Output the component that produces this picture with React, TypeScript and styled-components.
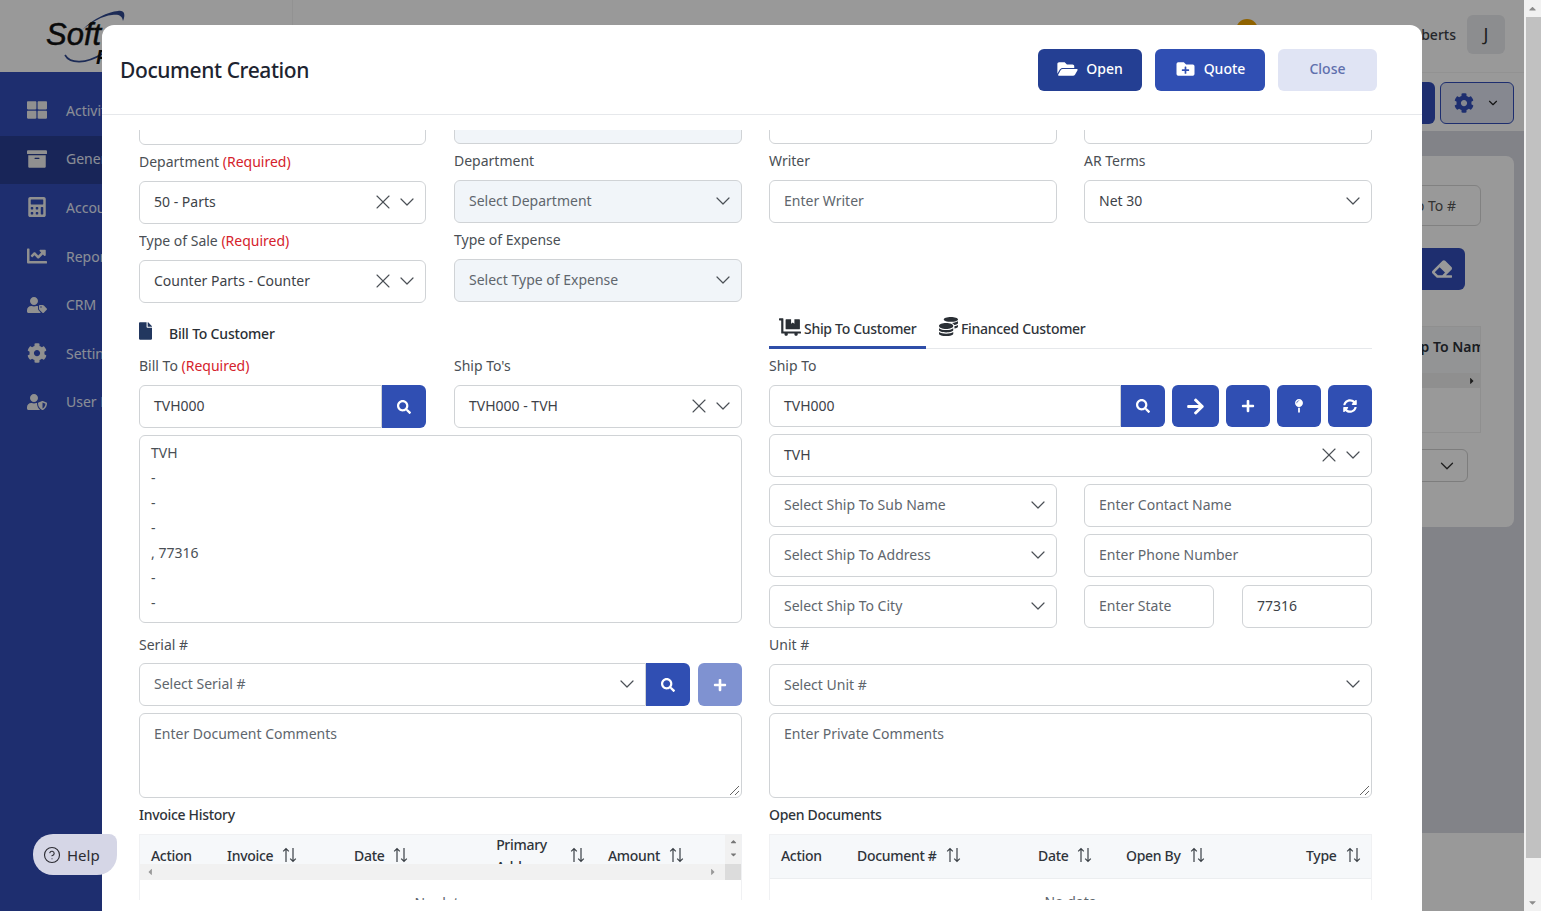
import React from "react";
import styled, { createGlobalStyle } from "styled-components";
import { ChevronDown, X, CircleHelp } from "lucide-react";
import {
  FaThLarge, FaArchive, FaCalculator, FaChartLine, FaUserTag, FaCog, FaUserShield,
  FaFolderOpen, FaFolderPlus, FaSearch, FaArrowRight, FaPlus, FaMapPin, FaSyncAlt,
  FaFile, FaDollyFlatbed, FaCoins, FaEraser, FaCaretRight, FaCaretUp, FaCaretDown, FaCaretLeft,
} from "react-icons/fa";

const Global = createGlobalStyle`
  html, body { margin: 0; padding: 0; height: 911px; overflow: hidden; background: #fff; }
  * { box-sizing: border-box; }
  body { font-family: "Noto Sans", "Liberation Sans", sans-serif; font-size: 14px; color: #3d4248; }
`;

const Screen = styled.div`
  display: flex;
  width: 1541px;
  height: 911px;
  overflow: hidden;
`;

const Page = styled.div`
  position: relative;
  flex: 1;
  display: flex;
  flex-direction: column;
  height: 911px;
  overflow: hidden;
  background: #fff;
`;

const Backdrop = styled.div`
  position: absolute;
  inset: 0;
  background: rgba(0, 0, 0, 0.4);
`;

/* page behind the modal */
const TopBar = styled.header`
  height: 72px;
  flex: none;
  display: flex;
  align-items: center;
  padding-right: 19px;
  background: #fff;
`;

const LogoArea = styled.div`
  position: relative;
  width: 293px;
  height: 72px;
  border-right: 1px solid #f4f4f4;
`;

const LogoText = styled.span`
  position: absolute;
  left: 46px;
  top: 17px;
  font-family: "Liberation Sans", sans-serif;
  font-style: italic;
  font-size: 31px;
  -webkit-text-stroke: 0.5px #111;
  color: #111;
`;

const LogoSub = styled.span`
  position: absolute;
  left: 96px;
  top: 46px;
  font-family: "Liberation Sans", sans-serif;
  font-style: italic;
  font-weight: 700;
  font-size: 20px;
  color: #111;
`;

const LogoSwoosh = styled.svg`
  position: absolute;
  left: 60px;
  top: 8px;
`;

const TopRight = styled.div`
  flex: 1;
  display: flex;
  align-items: center;
  justify-content: flex-end;
`;

const Dot = styled.span`
  width: 22px;
  height: 22px;
  margin: -13px 102px 0 0;
  border-radius: 50%;
  background: #f0a500;
`;

const UserName = styled.span`
  font-weight: 500;
  font-size: 14px;
  margin: -4px 11px 0 0;
`;

const Avatar = styled.div`
  width: 38px;
  height: 39px;
  margin-top: -4px;
  border-radius: 6px;
  background: #e9ebee;
  display: flex;
  align-items: center;
  justify-content: center;
  font-size: 18px;
  color: #333;
`;

const Body = styled.div`
  flex: 1;
  display: flex;
  min-height: 0;
`;

const Sidebar = styled.nav`
  width: 240px;
  flex: none;
  padding-top: 15px;
  background: #324eb9;
`;

const NavItem = styled.div<{ $active?: boolean }>`
  height: 48.6px;
  padding: 0 0 2px 27px;
  display: flex;
  align-items: center;
  gap: 19px;
  color: #e6ebfb;
  font-size: 14px;
  background: ${(p) => (p.$active ? "#283f93" : "transparent")};
  svg { width: 20px; height: 20px; color: #f0f0f0; }
`;

const Main = styled.main`
  flex: 1;
  display: flex;
  flex-direction: column;
  min-width: 0;
`;

const Toolbar = styled.div`
  height: 59px;
  flex: none;
  display: flex;
  justify-content: flex-end;
  gap: 5px;
  padding: 9px 10px 0 0;
  border-top: 1px solid #f3f3f3;
  background: #fff;
`;

const ToolPrimary = styled.div`
  width: 100px;
  height: 42px;
  border-radius: 6px;
  background: #324eb9;
`;

const ToolGear = styled.div`
  width: 74px;
  height: 42px;
  border: 1px solid #324eb9;
  border-radius: 6px;
  background: #dfe3f1;
  color: #324eb9;
  display: flex;
  align-items: center;
  justify-content: center;
  gap: 12px;
  svg:last-child { color: #222; }
`;

const Content = styled.div`
  height: 702px;
  flex: none;
  padding: 25px 10px 0 0;
  background: #d9dae3;
`;

const BgCard = styled.div`
  height: 371px;
  padding-top: 29px;
  display: flex;
  flex-direction: column;
  align-items: flex-end;
  border-radius: 8px;
  background: #fff;
`;

const BgInput = styled.div`
  width: 200px;
  height: 41px;
  margin: 0 33px 22px 0;
  padding-right: 24px;
  border: 1px solid #d8d8d8;
  border-radius: 6px;
  display: flex;
  align-items: center;
  justify-content: flex-end;
  color: #555;
`;

const BgEraser = styled.div`
  width: 100px;
  height: 42px;
  margin: 0 49px 36px 0;
  border-radius: 6px;
  background: #324eb9;
  color: #fff;
  display: flex;
  align-items: center;
  justify-content: flex-end;
  padding-right: 13px;
  svg { width: 20px; height: 20px; }
`;

const BgTable = styled.div`
  width: 200px;
  height: 107px;
  margin: 0 33px 16px 0;
  border: 1px solid #eee;
  overflow: hidden;
`;

const BgTableHead = styled.div`
  height: 46px;
  padding: 0 0 8px 118px;
  display: flex;
  align-items: center;
  background: #f6f7f9;
  font-weight: 600;
  white-space: nowrap;
  color: #2c3138;
`;

const BgTableBar = styled.div`
  height: 15px;
  padding-right: 3px;
  display: flex;
  align-items: center;
  justify-content: flex-end;
  background: #eee;
  color: #333;
  font-size: 10px;
`;

const BgSelect = styled.div`
  width: 200px;
  height: 33px;
  margin-right: 46px;
  padding-right: 9px;
  border: 1px solid #d0d0d0;
  border-radius: 6px;
  display: flex;
  align-items: center;
  justify-content: flex-end;
  color: #333;
`;

const Footer = styled.div`
  flex: 1;
  background: #fff;
`;

const PageBar = styled.div`
  width: 17px;
  height: 911px;
  flex: none;
  display: flex;
  flex-direction: column;
  align-items: center;
  background: #f1f1f1;
  color: #8c8c8c;
`;

const BarArrow = styled.div`
  width: 17px;
  height: 17px;
  display: flex;
  align-items: center;
  justify-content: center;
  font-size: 11px;
`;

const BarThumb = styled.div`
  width: 15px;
  height: 841px;
  margin-left: 2px;
  background: #c1c1c1;
`;

const BarSpace = styled.div`
  flex: 1;
`;

/* modal */
const Modal = styled.section`
  position: absolute;
  left: 102px;
  top: 25px;
  width: 1320px;
  height: 886px;
  border-radius: 12px 12px 0 0;
  background: #fff;
  overflow: hidden;
`;

const ModalHeader = styled.div`
  height: 90px;
  padding: 0 45px 0 18px;
  display: flex;
  align-items: center;
  gap: 13px;
  border-bottom: 1px solid #e6e8eb;
`;

const Title = styled.h1`
  flex: 1;
  margin: 0;
  font-size: 21px;
  letter-spacing: -0.4px;
  font-weight: 500;
  color: #1d2430;
`;

const HeadButton = styled.button<{ $bg: string; $fg: string; $w: number }>`
  width: ${(p) => p.$w}px;
  height: 42px;
  padding: 0 0 2px;
  border: 0;
  border-radius: 6px;
  display: flex;
  align-items: center;
  justify-content: center;
  gap: 8px;
  font: 500 14px "Noto Sans", sans-serif;
  background: ${(p) => p.$bg};
  color: ${(p) => p.$fg};
  svg { width: 21px; height: 18px; }
`;

const ModalClip = styled.div`
  height: 783px;
  padding: 15px 50px 0 37px;
`;

const ModalScroll = styled.div`
  height: 770px;
  overflow: hidden;
`;

const Form = styled.div`
  margin-top: -29px;
  display: grid;
  grid-template-columns: 603px 603px;
  column-gap: 27px;
`;

const Half = styled.div<{ $cols: string; $gap: number }>`
  display: grid;
  grid-template-columns: ${(p) => p.$cols};
  column-gap: ${(p) => p.$gap}px;
  align-content: start;
`;

const Stack = styled.div<{ $shift?: boolean }>`
  display: flex;
  flex-direction: column;
  margin-top: ${(p) => (p.$shift ? "1px" : "0")};
`;

const Col = styled.div`
  display: flex;
  flex-direction: column;
`;

const Label = styled.label<{ $strong?: boolean; $short?: boolean }>`
  display: block;
  height: ${(p) => (p.$short ? 35 : 36)}px;
  line-height: 34px;
  font-size: 14px;
  white-space: nowrap;
  letter-spacing: ${(p) => (p.$strong ? "-0.3px" : "0")};
  color: ${(p) => (p.$strong ? "#2f343a" : "#4a4f55")};
  font-weight: ${(p) => (p.$strong ? 500 : 400)};
`;

const Required = styled.span`
  color: #d5222c;
`;

const Control = styled.div<{ $h?: number; $fill?: boolean; $mb?: number; $flatRight?: boolean }>`
  height: ${(p) => p.$h ?? 43}px;
  margin-bottom: ${(p) => p.$mb ?? 0}px;
  flex: none;
  display: flex;
  align-items: center;
  padding: 0 6px 2px 14px;
  border: 1px solid #d0d3d6;
  border-radius: ${(p) => (p.$flatRight ? "6px 0 0 6px" : "6px")};
  background: ${(p) => (p.$fill ? "#f1f5f9" : "#fff")};
  min-width: 0;
`;

const Value = styled.span<{ $muted?: boolean }>`
  flex: 1;
  font-size: 14px;
  white-space: nowrap;
  color: ${(p) => (p.$muted ? "#60666d" : "#3d4248")};
`;

const Icon24 = styled.span`
  width: 24px;
  height: 24px;
  flex: none;
  color: #4b5056;
  svg { display: block; }
`;

const Group = styled.div<{ $mb?: number }>`
  display: flex;
  margin-bottom: ${(p) => p.$mb ?? 0}px;
  gap: 0;
  > div:first-child { flex: 1; }
`;

const IconBtn = styled.button<{ $w?: number; $left?: number; $edge?: string; $soft?: boolean }>`
  width: ${(p) => p.$w ?? 44}px;
  flex: none;
  margin-left: ${(p) => p.$left ?? 0}px;
  border: 0;
  border-radius: ${(p) => p.$edge ?? "6px"};
  display: flex;
  align-items: center;
  justify-content: center;
  color: #fff;
  background: ${(p) => (p.$soft ? "#7f92d1" : "#304fb3")};
  svg { width: 14px; height: 14px; }
`;

const BigArrow = styled(FaArrowRight)`
  && { width: 19px; height: 19px; }
`;

const SectionTitle = styled.div`
  height: 46px;
  display: flex;
  align-items: center;
  padding-top: 14px;
  gap: 17px;
  font-weight: 500;
  font-size: 14px;
  letter-spacing: -0.2px;
  color: #2a2f35;
  svg { width: 13px; height: 18px; margin-top: -5px; color: #22375f; }
`;

const Tabs = styled.div`
  height: 46px;
  display: flex;
  align-items: flex-end;
  border-bottom: 1px solid #e6e8eb;
`;

const Tab = styled.div<{ $active?: boolean; $w: number; $pad: number }>`
  width: ${(p) => p.$w}px;
  height: 38px;
  padding-left: ${(p) => p.$pad}px;
  margin-bottom: -1px;
  display: flex;
  align-items: center;
  gap: 3px;
  font-size: 14px;
  font-weight: 500;
  letter-spacing: -0.3px;
  white-space: nowrap;
  color: #2f343a;
  border-bottom: 3px solid ${(p) => (p.$active ? "#2f4ea8" : "transparent")};
  svg { flex: none; color: #2a2f35; margin-top: -4px; }
`;

const AddressBox = styled.div`
  height: 188px;
  margin: 7px 0 5px;
  padding: 4px 11px;
  border: 1px solid #d0d3d6;
  border-radius: 6px;
  line-height: 25px;
  font-size: 14px;
  color: #4a4f55;
`;

const TextArea = styled.div`
  position: relative;
  height: 85px;
  padding: 10px 14px;
  border: 1px solid #d0d3d6;
  border-radius: 6px;
  color: #60666d;
`;

const Grip = styled.svg`
  position: absolute;
  right: 1px;
  bottom: 1px;
`;

const Spacer = styled.div`
  height: 80px;
`;

const Cells = styled.div`
  display: grid;
  grid-template-columns: 288px 288px;
  column-gap: 27px;
  grid-template-rows: 50px 51px 43px;
`;

const TwoUp = styled.div`
  display: grid;
  grid-template-columns: 130px 130px;
  column-gap: 28px;
`;

const Table = styled.div`
  border: 1px solid #f0f1f3;
  height: 70px;
`;

const HeadClip = styled.div`
  display: flex;
  height: 29px;
  overflow: hidden;
  background: #f6f8fa;
`;

const HeadRow = styled.div<{ $cols: string; $h: number; $pb?: number }>`
  flex: 1;
  min-width: 0;
  height: ${(p) => p.$h}px;
  padding-bottom: ${(p) => p.$pb ?? 0}px;
  display: grid;
  grid-template-columns: ${(p) => p.$cols};
  grid-template-rows: minmax(0, 1fr);
  align-items: center;
  background: #f6f8fa;
  border-bottom: 1px solid #eceef0;
`;

const HeadCell = styled.div<{ $gap?: number }>`
  display: flex;
  align-items: center;
  gap: ${(p) => p.$gap ?? 9}px;
  padding-left: 11px;
  font-weight: 500;
  font-size: 14px;
  letter-spacing: -0.3px;
  color: #2f343a;
  white-space: nowrap;
`;

const TwoLine = styled.span`
  width: 51px;
  text-align: center;
  white-space: normal;
  line-height: 22px;
  margin-top: 2px;
`;

const VBar = styled.div`
  width: 16px;
  flex: none;
  display: flex;
  flex-direction: column;
  background: #f1f1f1;
  color: #777;
  font-size: 9px;
`;

const VArrow = styled.div`
  height: 13px;
  display: flex;
  align-items: center;
  justify-content: center;
`;

const HBarRow = styled.div`
  height: 16px;
  display: flex;
  background: #f1f1f1;
`;

const HBar = styled.div`
  flex: 1;
  padding: 0 7px 0 5px;
  display: flex;
  align-items: center;
  justify-content: space-between;
  color: #999;
  font-size: 10px;
`;

const BarCorner = styled.div`
  width: 16px;
  background: #dcdcdc;
`;

const NoData = styled.div`
  padding-top: 13px;
  text-align: center;
  font-size: 14px;
  color: #60666d;
`;

const Help = styled.div`
  position: absolute;
  left: 33px;
  top: 834px;
  width: 84px;
  height: 41px;
  padding-left: 10px;
  display: flex;
  align-items: center;
  gap: 6px;
  border-radius: 20px 8px 20px 20px;
  background: #d5d6e6;
  font-size: 15px;
  color: #2c2c33;
`;

const Sort = () => (
  <svg width="15" height="16" viewBox="0 0 15 16" fill="none" stroke="#3a4046" strokeWidth="1.2">
    <path d="M4 15V1.5M1.2 4.3 4 1.5l2.8 2.8" />
    <path d="M11 1v13.5M8.2 11.7l2.8 2.8 2.8-2.8" />
  </svg>
);

const Select = ({ value, muted, clear, h, fill, mb, flatRight }: {
  value: string; muted?: boolean; clear?: boolean; h?: number; fill?: boolean; mb?: number; flatRight?: boolean;
}) => (
  <Control $h={h} $fill={fill} $mb={mb} $flatRight={flatRight}>
    <Value $muted={muted}>{value}</Value>
    {clear && <Icon24><X size={24} strokeWidth={1.1} /></Icon24>}
    <Icon24><ChevronDown size={24} strokeWidth={1.2} /></Icon24>
  </Control>
);

const Input = ({ value, muted, h, fill, flatRight }: {
  value?: string; muted?: boolean; h?: number; fill?: boolean; flatRight?: boolean;
}) => (
  <Control $h={h} $fill={fill} $flatRight={flatRight}>
    <Value $muted={muted}>{value}</Value>
  </Control>
);

const Req = () => <Required>(Required)</Required>;

const NAV: [React.ReactNode, string, boolean?][] = [
  [<FaThLarge />, "Activity"],
  [<FaArchive />, "General", true],
  [<FaCalculator />, "Accounting"],
  [<FaChartLine />, "Reports"],
  [<FaUserTag />, "CRM"],
  [<FaCog />, "Settings"],
  [<FaUserShield />, "User Management"],
];

const LEFT = { $cols: "287px 288px", $gap: 28 };
const RIGHT = { $cols: "288px 288px", $gap: 27 };

export default function App() {
  return (
    <Screen>
      <Global />
      <Page>
        <TopBar>
          <LogoArea>
            <LogoSwoosh width="75" height="60" viewBox="0 0 75 60" fill="none">
              <path d="M22 22C34 10 48 4 58 3c6-1 8 3 5 10-1-6-5-7-11-6-10 1-20 7-30 15Z" fill="#30488f" />
              <path d="M5 47c5 9 21 9 37-1" stroke="#30488f" strokeWidth="1.6" />
            </LogoSwoosh>
            <LogoText>Soft</LogoText>
            <LogoSub>P</LogoSub>
          </LogoArea>
          <TopRight>
            <Dot />
            <UserName>James Roberts</UserName>
            <Avatar>J</Avatar>
          </TopRight>
        </TopBar>
        <Body>
          <Sidebar>
            {NAV.map(([icon, text, active]) => (
              <NavItem key={text} $active={active}>{icon}{text}</NavItem>
            ))}
          </Sidebar>
          <Main>
            <Toolbar>
              <ToolPrimary />
              <ToolGear><FaCog size={20} /><ChevronDown size={14} /></ToolGear>
            </Toolbar>
            <Content>
              <BgCard>
                <BgInput>Ship To #</BgInput>
                <BgEraser><FaEraser /></BgEraser>
                <BgTable>
                  <BgTableHead>Ship To Name</BgTableHead>
                  <BgTableBar><FaCaretRight /></BgTableBar>
                </BgTable>
                <BgSelect><ChevronDown size={22} strokeWidth={1.4} /></BgSelect>
              </BgCard>
            </Content>
            <Footer />
          </Main>
        </Body>
        <Backdrop />
        <Modal>
          <ModalHeader>
            <Title>Document Creation</Title>
            <HeadButton $w={104} $bg="#243f93" $fg="#fff"><FaFolderOpen />Open</HeadButton>
            <HeadButton $w={110} $bg="#304fb3" $fg="#fff"><FaFolderPlus />Quote</HeadButton>
            <HeadButton $w={99} $bg="#e0e4f4" $fg="#5f70ad">Close</HeadButton>
          </ModalHeader>
          <ModalClip>
            <ModalScroll>
              <Form>
                <Col>
                  <Half {...LEFT}>
                    <Stack $shift>
                      <Input />
                      <Label>Department <Req /></Label>
                      <Select value="50 - Parts" clear />
                      <Label>Type of Sale <Req /></Label>
                      <Select value="Counter Parts - Counter" clear />
                    </Stack>
                    <Stack>
                      <Input fill />
                      <Label>Department</Label>
                      <Select value="Select Department" muted fill />
                      <Label>Type of Expense</Label>
                      <Select value="Select Type of Expense" muted fill />
                    </Stack>
                  </Half>
                  <SectionTitle><FaFile />Bill To Customer</SectionTitle>
                  <Half {...LEFT}>
                    <Stack>
                      <Label>Bill To <Req /></Label>
                      <Group>
                        <Input value="TVH000" flatRight />
                        <IconBtn $edge="0 6px 6px 0"><FaSearch /></IconBtn>
                      </Group>
                    </Stack>
                    <Stack>
                      <Label>Ship To's</Label>
                      <Select value="TVH000 - TVH" clear />
                    </Stack>
                  </Half>
                  <AddressBox>
                    TVH<br />-<br />-<br />-<br />, 77316<br />-<br />-
                  </AddressBox>
                  <Label $short>Serial #</Label>
                  <Group $mb={7}>
                    <Select value="Select Serial #" muted flatRight />
                    <IconBtn $edge="0 6px 6px 0"><FaSearch /></IconBtn>
                    <IconBtn $left={8} $soft><FaPlus /></IconBtn>
                  </Group>
                  <TextArea>
                    Enter Document Comments
                    <Grip width="11" height="11" viewBox="0 0 11 11" stroke="#666"><path d="M1 10 10 1M6 10l4-4" /></Grip>
                  </TextArea>
                  <Label $strong>Invoice History</Label>
                  <Table>
                    <HeadClip>
                      <HeadRow $h={41} $cols="76px 127px 142px 112px 1fr">
                        <HeadCell>Action</HeadCell>
                        <HeadCell>Invoice<Sort /></HeadCell>
                        <HeadCell>Date<Sort /></HeadCell>
                        <HeadCell $gap={23}><TwoLine>Primary Address</TwoLine><Sort /></HeadCell>
                        <HeadCell>Amount<Sort /></HeadCell>
                      </HeadRow>
                      <VBar>
                        <VArrow><FaCaretUp /></VArrow>
                        <VArrow><FaCaretDown /></VArrow>
                      </VBar>
                    </HeadClip>
                    <HBarRow>
                      <HBar><FaCaretLeft /><FaCaretRight /></HBar>
                      <BarCorner />
                    </HBarRow>
                    <NoData>No data</NoData>
                  </Table>
                </Col>
                <Col>
                  <Half {...RIGHT}>
                    <Stack>
                      <Input />
                      <Label>Writer</Label>
                      <Input value="Enter Writer" muted />
                    </Stack>
                    <Stack>
                      <Input />
                      <Label>AR Terms</Label>
                      <Select value="Net 30" />
                    </Stack>
                  </Half>
                  <Spacer />
                  <Tabs>
                    <Tab $active $w={157} $pad={10}><FaDollyFlatbed size={22} />Ship To Customer</Tab>
                    <Tab $w={170} $pad={13}><FaCoins size={19} />Financed Customer</Tab>
                  </Tabs>
                  <Label>Ship To</Label>
                  <Group $mb={7}>
                    <Input value="TVH000" h={42} flatRight />
                    <IconBtn $edge="0 6px 6px 0"><FaSearch /></IconBtn>
                    <IconBtn $w={47} $left={7}><BigArrow /></IconBtn>
                    <IconBtn $left={7}><FaPlus /></IconBtn>
                    <IconBtn $left={7}><FaMapPin /></IconBtn>
                    <IconBtn $left={7}><FaSyncAlt /></IconBtn>
                  </Group>
                  <Select value="TVH" clear mb={7} />
                  <Cells>
                    <Select value="Select Ship To Sub Name" muted />
                    <Input value="Enter Contact Name" muted />
                    <Select value="Select Ship To Address" muted />
                    <Input value="Enter Phone Number" muted />
                    <Select value="Select Ship To City" muted />
                    <TwoUp>
                      <Input value="Enter State" muted />
                      <Input value="77316" />
                    </TwoUp>
                  </Cells>
                  <Label>Unit #</Label>
                  <Group $mb={7}>
                    <Select value="Select Unit #" muted h={42} />
                  </Group>
                  <TextArea>
                    Enter Private Comments
                    <Grip width="11" height="11" viewBox="0 0 11 11" stroke="#666"><path d="M1 10 10 1M6 10l4-4" /></Grip>
                  </TextArea>
                  <Label $strong>Open Documents</Label>
                  <Table>
                    <HeadRow $h={44} $pb={3} $cols="76px 181px 88px 180px 1fr">
                      <HeadCell>Action</HeadCell>
                      <HeadCell>Document #<Sort /></HeadCell>
                      <HeadCell>Date<Sort /></HeadCell>
                      <HeadCell>Open By<Sort /></HeadCell>
                      <HeadCell>Type<Sort /></HeadCell>
                    </HeadRow>
                    <NoData>No data</NoData>
                  </Table>
                </Col>
              </Form>
            </ModalScroll>
          </ModalClip>
        </Modal>
        <Help><CircleHelp size={18} strokeWidth={1.5} />Help</Help>
      </Page>
      <PageBar>
        <BarArrow><FaCaretUp /></BarArrow>
        <BarThumb />
        <BarSpace />
        <BarArrow><FaCaretDown /></BarArrow>
      </PageBar>
    </Screen>
  );
}
